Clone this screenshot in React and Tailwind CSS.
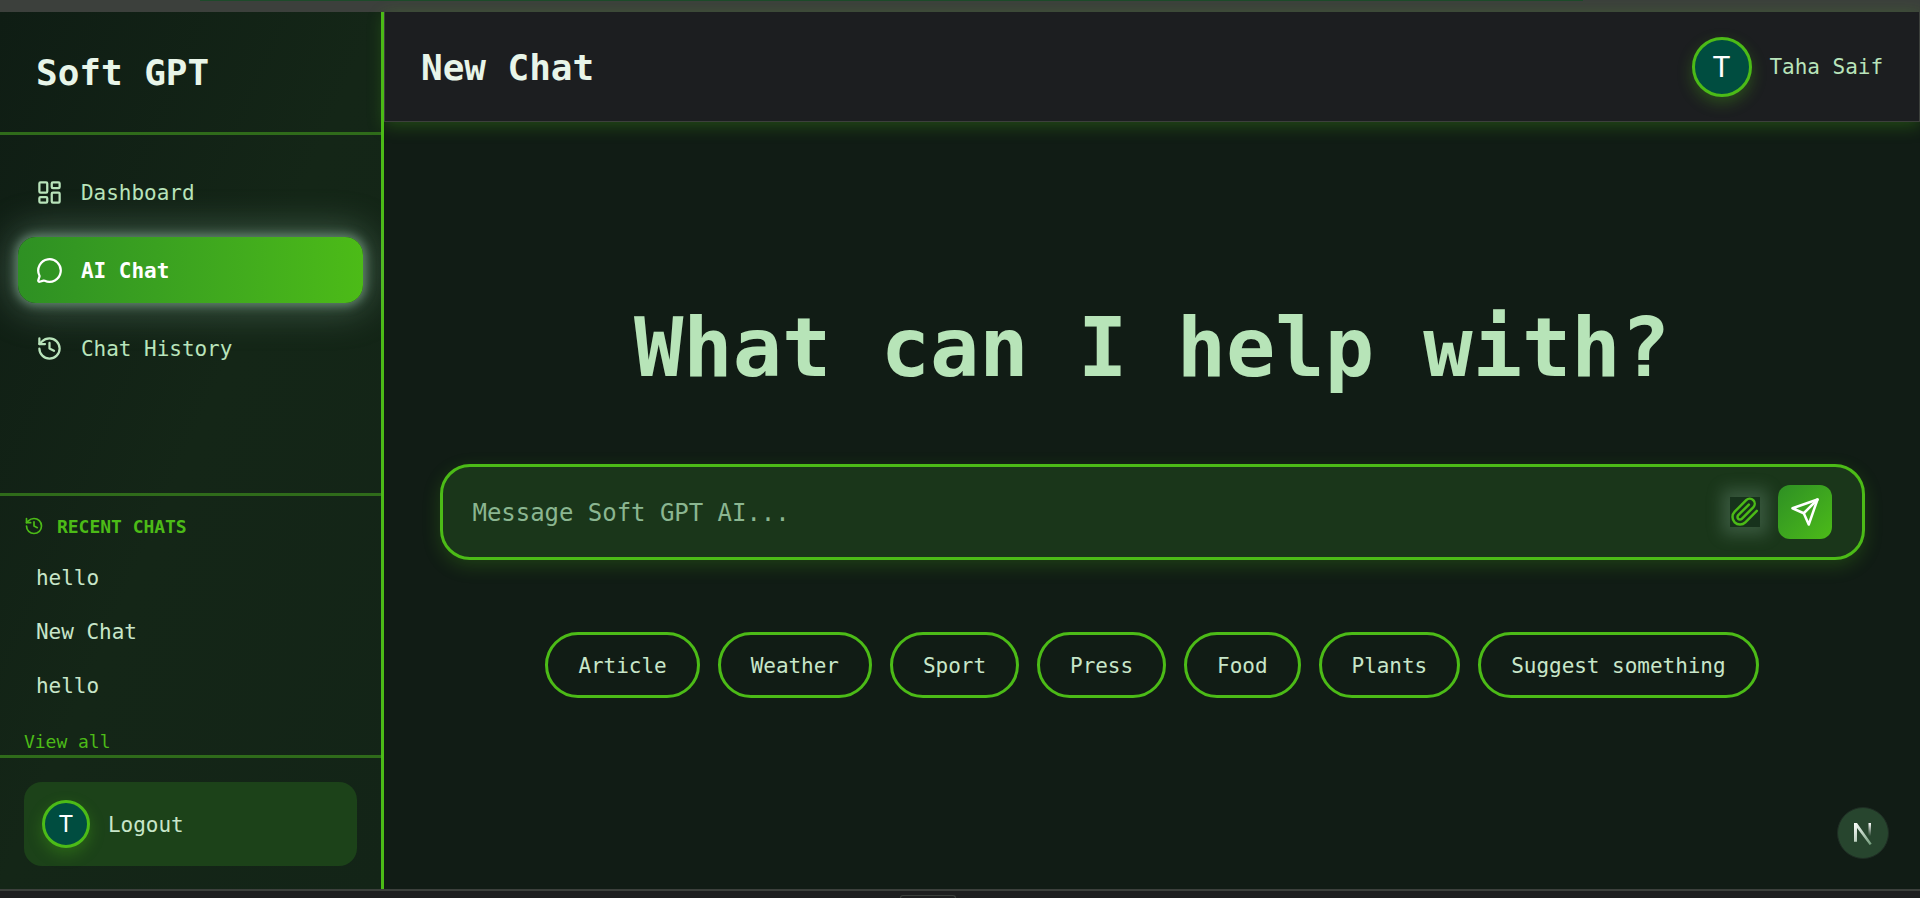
import React from 'react';
import { LayoutDashboard, MessageCircle, History } from 'lucide-react';
import { FiPaperclip, FiSend } from 'react-icons/fi';

const NAV_ITEMS = [
  { label: 'Dashboard', icon: LayoutDashboard },
  { label: 'AI Chat', icon: MessageCircle, active: true },
  { label: 'Chat History', icon: History },
];

const RECENT_CHATS = ['hello', 'New Chat', 'hello'];
const CHIPS = ['Article', 'Weather', 'Sport', 'Press', 'Food', 'Plants', 'Suggest something'];

const Avatar = ({ className }) => (
  <div className={`flex shrink-0 items-center justify-center rounded-full border-[3px] border-[#4cbb17] bg-[#004d40] font-['Roboto',sans-serif] text-white shadow-[0_6px_15px_rgba(76,187,23,0.3)] ${className}`}>
    T
  </div>
);

const Sidebar = () => (
  <aside className="flex w-[384px] shrink-0 flex-col border-r-[3px] border-[#4cbb17] bg-linear-to-br from-[#0f1d14] via-[#142617] to-[#132417]">
    <div className="flex h-[123px] shrink-0 items-center border-b-[3px] border-[#2f6b1a] pl-9 text-[36px] font-bold text-[#e8f5e9]">
      <span className="pt-[2px]">Soft GPT</span>
    </div>

    <nav className="flex flex-1 flex-col gap-3 px-[18px] pt-6">
      {NAV_ITEMS.map(({ label, icon: Icon, active }) => (
        <div
          key={label}
          className={`flex h-[66px] items-center gap-[18px] rounded-[18px] px-[18px] text-[21px] ${
            active
              ? 'bg-linear-to-r from-[#2e9023] to-[#4cbb17] font-bold text-white shadow-[0_0_10px_3px_rgba(130,170,145,0.6),0_0_36px_8px_rgba(130,170,145,0.4)]'
              : 'text-[#b9e4bb]'
          }`}
        >
          <Icon size={27} strokeWidth={2} />
          <span className="pt-[3px]">{label}</span>
        </div>
      ))}
    </nav>

    <div className="flex h-[262px] shrink-0 flex-col border-t-[3px] border-[#2f6b1a] px-6 pt-[18px]">
      <div className="flex h-6 items-center gap-[13px] text-[18px] font-bold text-[#4cbb17]">
        <History size={20} strokeWidth={2} />
        RECENT CHATS
      </div>
      <div className="mt-[13px] flex flex-col">
        {RECENT_CHATS.map((chat, i) => (
          <div key={i} className="flex h-[54px] items-center pl-3 pt-[2px] text-[21px] text-[#c8e6c9]">
            {chat}
          </div>
        ))}
      </div>
      <div className="mt-[15px] text-[18px] leading-[27px] text-[#4cbb17]">View all</div>
    </div>

    <div className="flex h-[134px] shrink-0 flex-col border-t-[3px] border-[#2f6b1a] px-6 pt-6">
      <div className="flex h-[84px] items-center gap-[18px] rounded-[18px] bg-[#1c4219] px-[18px] text-[21px] text-[#c8e6c9]">
        <Avatar className="h-12 w-12 text-[24px]" />
        <span className="pt-[3px]">Logout</span>
      </div>
    </div>
  </aside>
);

const Header = () => (
  <header className="relative z-10 flex h-[110px] shrink-0 items-center justify-between border-x border-b border-[#3c403c] bg-[#1c1e20] pl-9 pr-9 shadow-[0_4px_16px_rgba(76,187,23,0.3)]">
    <h2 className="pt-[2px] text-[36px] font-bold text-[#e8f5e9]">New Chat</h2>
    <div className="flex items-center gap-[18px]">
      <Avatar className="h-[60px] w-[60px] text-[30px]" />
      <span className="pt-[3px] text-[21px] text-[#b9e4bb]">Taha Saif</span>
    </div>
  </header>
);

const Composer = () => (
  <div className="flex h-[96px] w-[1425px] items-center justify-between rounded-[30px] border-[3px] border-[#4cbb17] bg-[#1a361a] pl-[30px] pr-[30px] shadow-[0_6px_18px_rgba(76,187,23,0.22)]">
    <span className="pt-[2px] text-[24px] text-[#8bb691]">Message Soft GPT AI...</span>
    <div className="flex items-center gap-[18px]">
      <button className="flex h-[30px] w-[30px] items-center justify-center bg-[#17321c] text-[#4cbb17] shadow-[0_0_16px_8px_rgba(130,170,145,0.3)]">
        <FiPaperclip size={30} strokeWidth={2} />
      </button>
      <button className="flex h-[54px] w-[54px] items-center justify-center rounded-[12px] bg-linear-to-br from-[#2e9023] to-[#4cbb17] text-white">
        <FiSend size={30} strokeWidth={2} />
      </button>
    </div>
  </div>
);

const NextBadge = () => (
  <div className="absolute bottom-[30px] right-[31px] flex h-[52px] w-[52px] items-center justify-center rounded-full border border-[#1f2d24] bg-[#27452e]">
    <svg width="24" height="24" viewBox="0 0 24 24" fill="none">
      <defs>
        <linearGradient id="next-n" x1="0" y1="0" x2="1" y2="1">
          <stop offset="0" stopColor="#ffffff" />
          <stop offset="1" stopColor="#6f9a78" />
        </linearGradient>
        <linearGradient id="next-bar" x1="0" y1="0" x2="0" y2="1">
          <stop offset="0" stopColor="#ffffff" />
          <stop offset="1" stopColor="#27452e" />
        </linearGradient>
      </defs>
      <path d="M3 2h3l14.7 20.7-2 1.3L6 7v13.7H3z" fill="url(#next-n)" />
      <rect x="17.5" y="2" width="2.5" height="13" fill="url(#next-bar)" />
    </svg>
  </div>
);

const App = () => (
  <div className="flex h-[898px] w-[1920px] flex-col overflow-hidden bg-[#1e1f20] font-['DejaVu_Sans_Mono',monospace] tracking-[-0.002em]">
    <div className="h-3 shrink-0 bg-[#3c403c]">
      <div className="ml-[200px] h-px w-[1383px] bg-[#1d4a2a]" />
    </div>
    <div className="flex h-[877px] shrink-0">
      <Sidebar />
      <main className="relative flex flex-1 flex-col bg-[#111c15]">
        <Header />
        <div className="flex flex-col items-center pt-[184px]">
          <h1 className="text-[82px] font-bold leading-[84px] text-[#b7e4b8]">What can I help with?</h1>
          <div className="mt-[74px]">
            <Composer />
          </div>
          <div className="mt-[72px] flex gap-[18px]">
            {CHIPS.map((chip) => (
              <div key={chip} className="flex h-[66px] items-center rounded-full border-[3px] border-[#4cbb17] px-[30px] pt-[4px] text-[21px] text-[#c8e6c9]">
                {chip}
              </div>
            ))}
          </div>
        </div>
        <NextBadge />
      </main>
    </div>
    <div className="h-[2px] shrink-0 bg-[#3c403c]" />
    <div className="flex flex-1 pl-[900px]">
      <div className="mt-1 h-[3px] w-[56px] rounded-t-[4px] border-x border-t border-[#3c403c]" />
    </div>
  </div>
);

export default App;
